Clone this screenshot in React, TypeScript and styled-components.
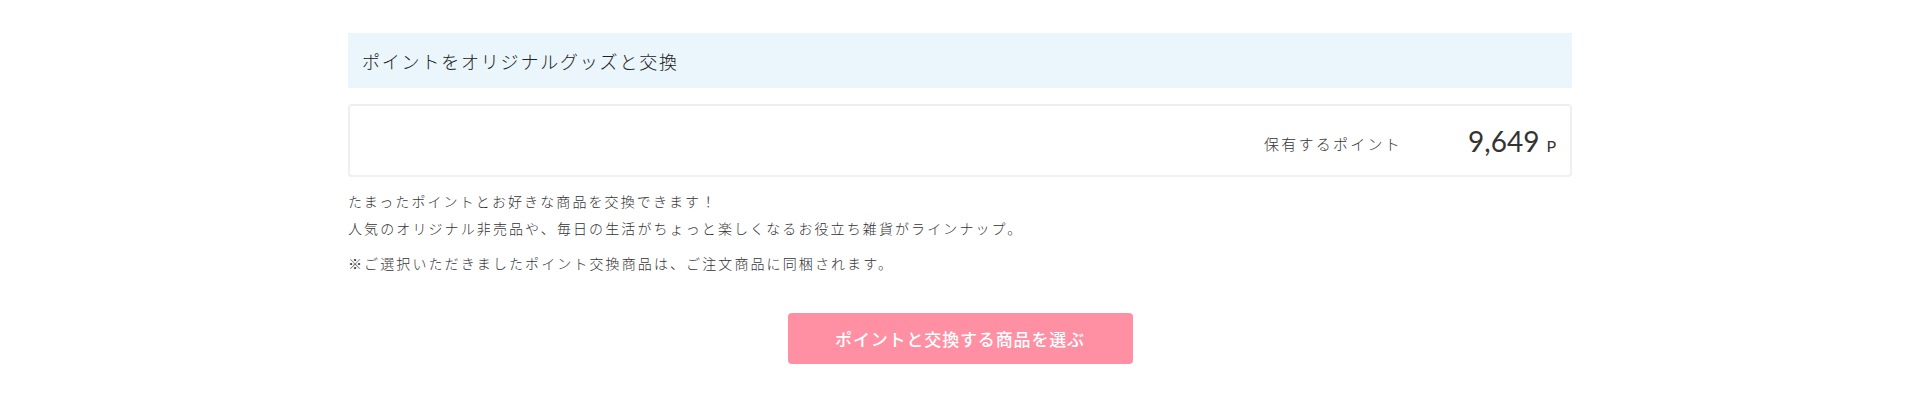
import styled, { createGlobalStyle } from 'styled-components';

const GlobalStyle = createGlobalStyle`
  body {
    margin: 0;
    background: #fff;
    font-family: "Noto Sans CJK JP", "Noto Sans", sans-serif;
    color: #333;
  }
`;

const Wrapper = styled.section`
  width: 1224px;
  margin: 0 auto;
  padding-top: 33px;
`;

const Heading = styled.h2`
  display: flex;
  align-items: center;
  height: 55px;
  margin: 0;
  padding: 0 14px;
  background: #eaf6fb;
  font-size: 18px;
  font-weight: 300;
  letter-spacing: 0.1em;
  color: #222;
`;

const PointBox = styled.div`
  display: flex;
  justify-content: flex-end;
  align-items: center;
  box-sizing: border-box;
  height: 73px;
  margin-top: 16px;
  padding-right: 14px;
  border: 2px solid #efefef;
  border-radius: 4px;
`;

const PointLabel = styled.span`
  font-size: 15px;
  letter-spacing: 0.15em;
  color: #333;
  font-weight: 300;
  margin-right: 66px;
  padding-top: 6px;
`;

const PointAmount = styled.span`
  display: flex;
  align-items: baseline;
  font-family: Lato, "Noto Sans", sans-serif;
  color: #333;
`;

const PointValue = styled.span`
  font-size: 28px;
`;

const PointUnit = styled.span`
  font-size: 16px;
  margin-left: 7px;
`;

const Note = styled.p<{ $gap?: number }>`
  margin: ${(p) => p.$gap ?? 0}px 0 0;
  font-size: 14px;
  font-weight: 300;
  line-height: 27px;
  letter-spacing: 0.15em;
  color: #333;
`;

const Actions = styled.div`
  display: flex;
  justify-content: center;
  margin-top: 36px;
`;

const SelectButton = styled.button`
  width: 345px;
  height: 51px;
  border: none;
  border-radius: 4px;
  background: #ff8fa3;
  color: #fff;
  font-family: "Noto Sans CJK JP", sans-serif;
  font-size: 17px;
  font-weight: 500;
  letter-spacing: 0.05em;
  cursor: pointer;
  &:hover {
    opacity: 0.85;
  }
`;

export default function App() {
  const points = 9649;
  return (
    <>
      <GlobalStyle />
      <Wrapper>
        <Heading>ポイントをオリジナルグッズと交換</Heading>
        <PointBox>
          <PointLabel>保有するポイント</PointLabel>
          <PointAmount>
            <PointValue>{points.toLocaleString('en-US')}</PointValue>
            <PointUnit>P</PointUnit>
          </PointAmount>
        </PointBox>
        <Note $gap={11}>
          たまったポイントとお好きな商品を交換できます！
          <br />
          人気のオリジナル非売品や、毎日の生活がちょっと楽しくなるお役立ち雑貨がラインナップ。
        </Note>
        <Note $gap={8}>※ご選択いただきましたポイント交換商品は、ご注文商品に同梱されます。</Note>
        <Actions>
          <SelectButton>ポイントと交換する商品を選ぶ</SelectButton>
        </Actions>
      </Wrapper>
    </>
  );
}
